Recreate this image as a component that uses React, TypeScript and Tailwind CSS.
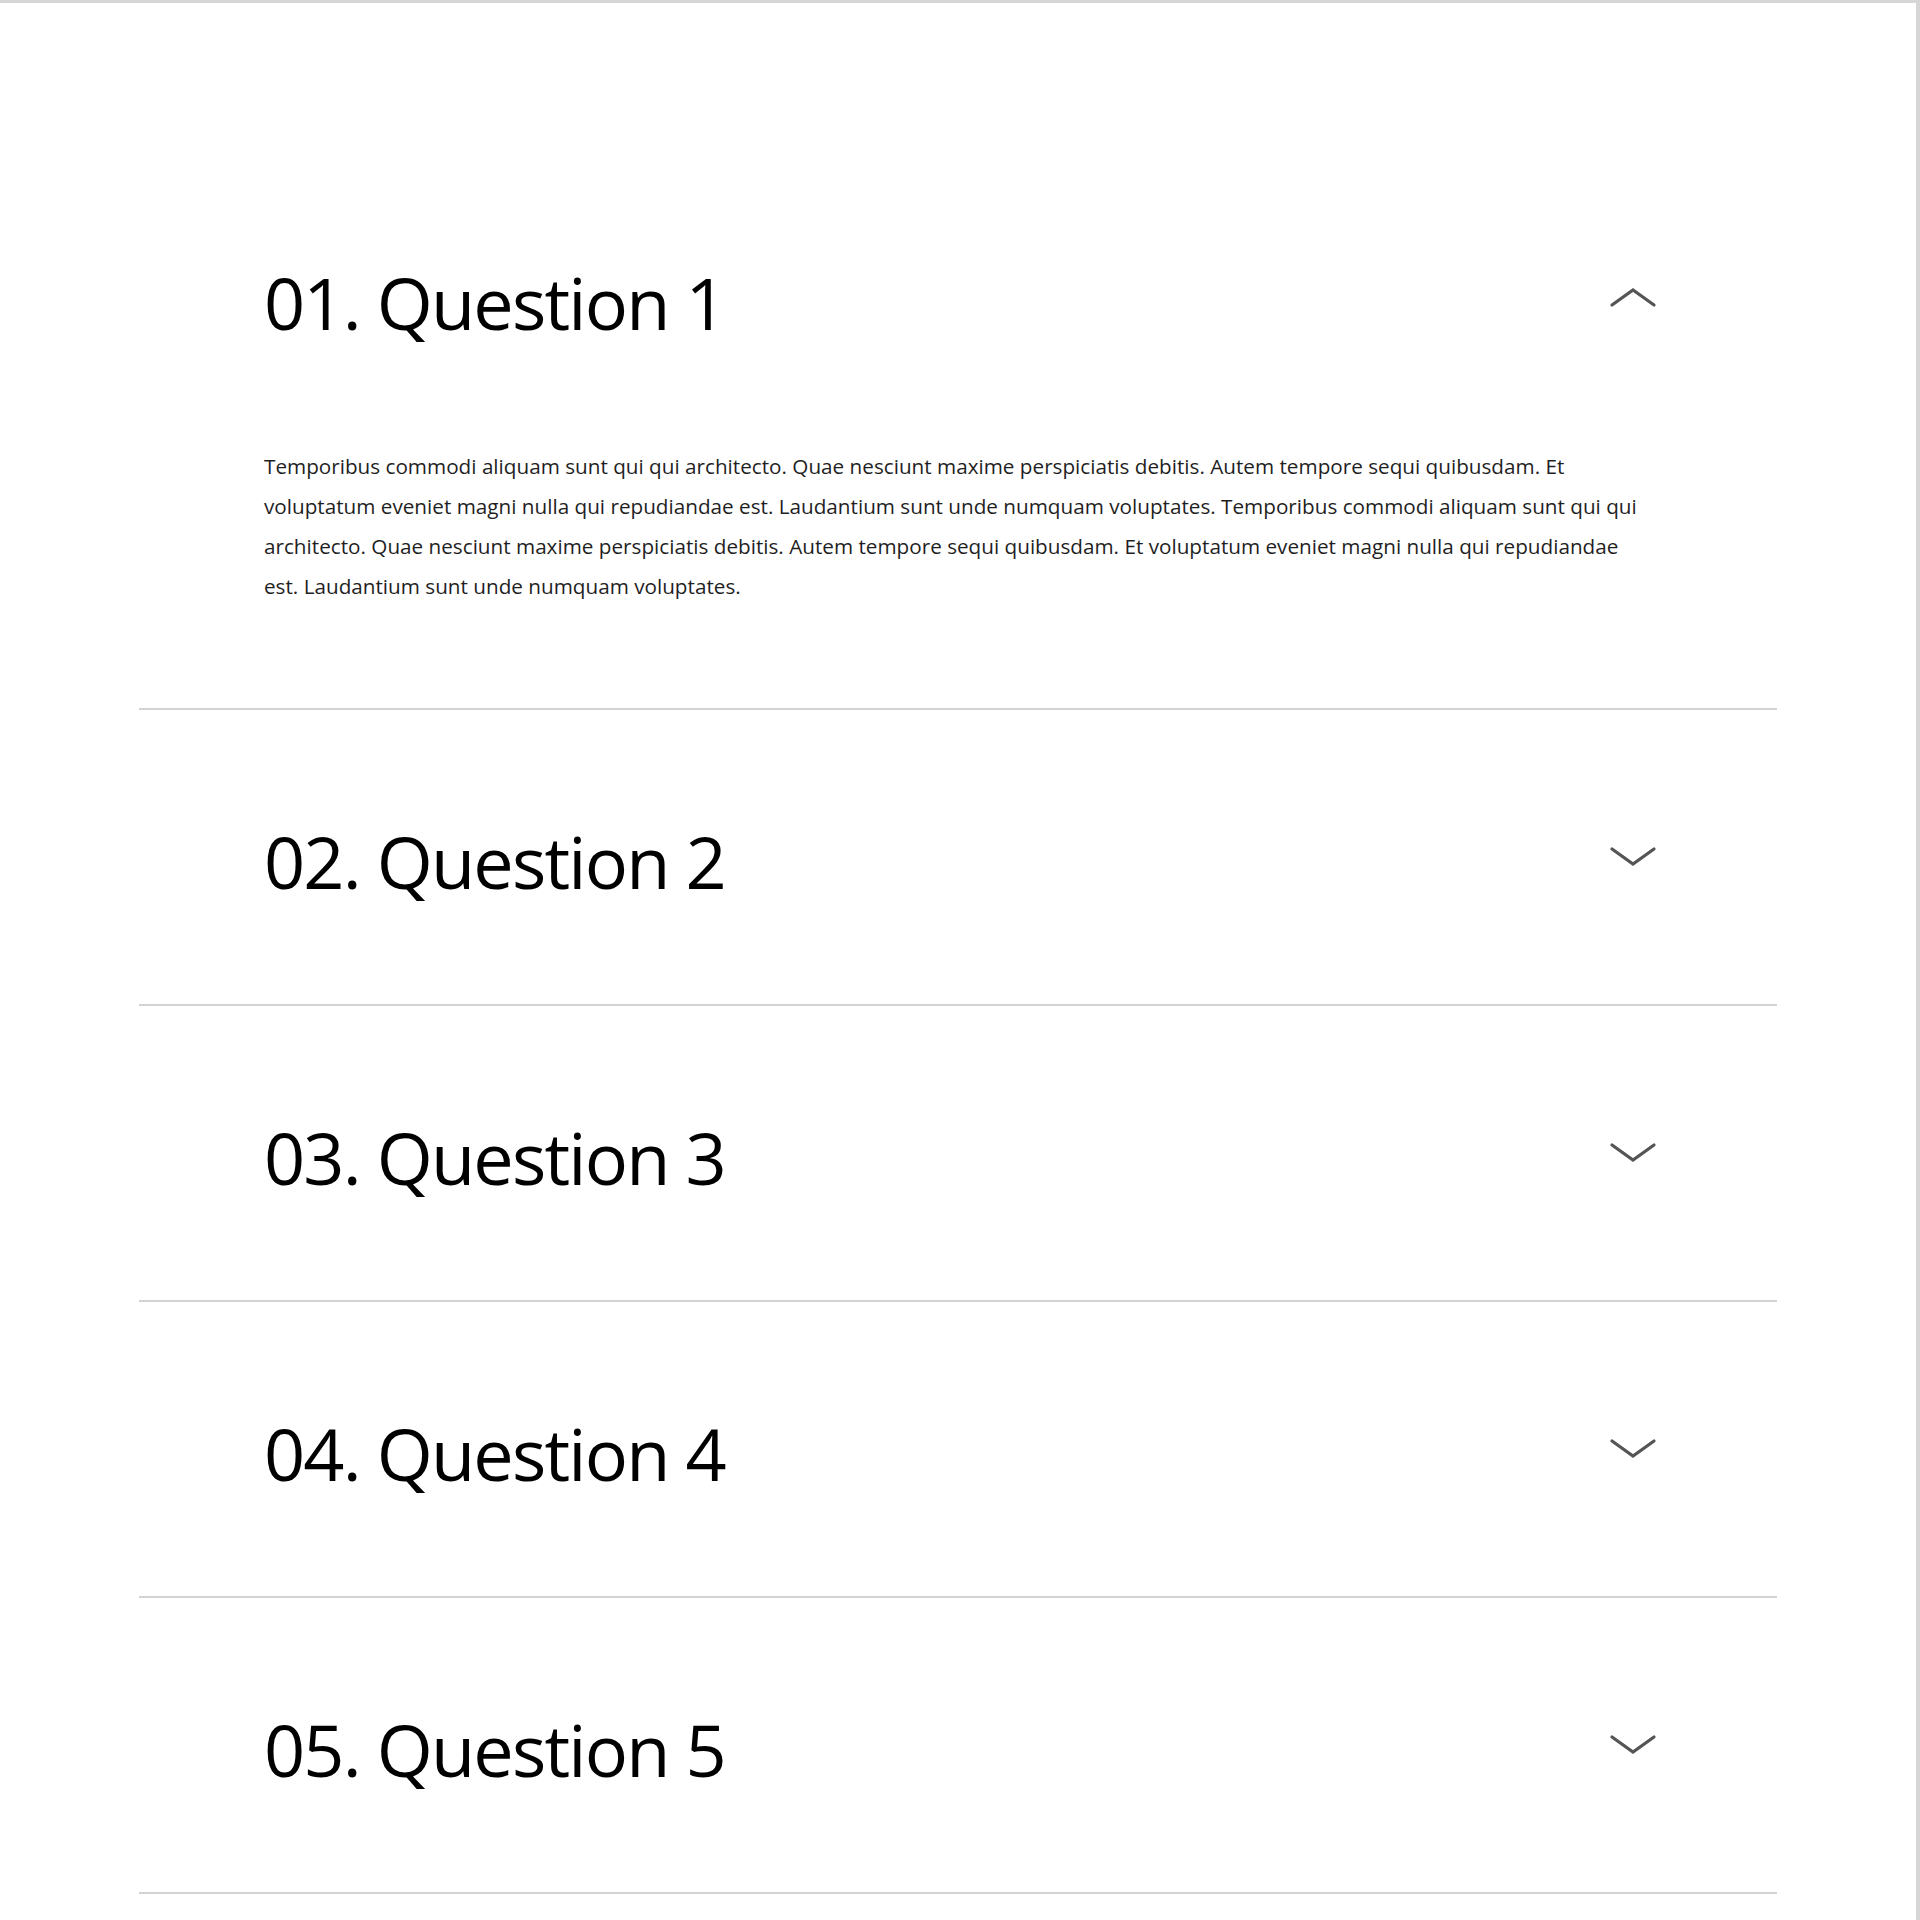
import { useState } from 'react';

const QUESTIONS = [
	{ id: 1, title: '01. Question 1' },
	{ id: 2, title: '02. Question 2' },
	{ id: 3, title: '03. Question 3' },
	{ id: 4, title: '04. Question 4' },
	{ id: 5, title: '05. Question 5' },
];

const ANSWER =
	'Temporibus commodi aliquam sunt qui qui architecto. Quae nesciunt maxime perspiciatis debitis. Autem tempore sequi quibusdam. Et voluptatum eveniet magni nulla qui repudiandae est. Laudantium sunt unde numquam voluptates. Temporibus commodi aliquam sunt qui qui architecto. Quae nesciunt maxime perspiciatis debitis. Autem tempore sequi quibusdam. Et voluptatum eveniet magni nulla qui repudiandae est. Laudantium sunt unde numquam voluptates.';

const Chevron = ({ open }: { open: boolean }) => (
	<svg width="48" height="22" viewBox="0 0 48 22" fill="none" className="shrink-0 mr-[-2px] mb-[10px]">
		<polyline
			points={open ? '3,19 24,4 45,19' : '3,4 24,19 45,4'}
			stroke="#555"
			strokeWidth="3.2"
			strokeLinecap="round"
			strokeLinejoin="miter"
		/>
	</svg>
);

export default function App() {
	const [openId, setOpenId] = useState<number | null>(1);

	return (
		<main className="min-h-[1920px] w-full bg-white border-t-[3px] border-r-4 border-[#d6d6d6] font-['Open_Sans',sans-serif]">
			<div className="mx-auto w-[1638px] pt-[147px]">
				{QUESTIONS.map((q) => {
					const open = openId === q.id;
					return (
						<div key={q.id} className="border-b-2 border-[#d2d2d2]">
							<button
								type="button"
								onClick={() => setOpenId(open ? null : q.id)}
								className={`flex w-full items-center justify-between pl-[125px] pr-[122px] text-left cursor-pointer ${open ? 'pt-[116px] pb-[108px]' : 'pt-[115px] pb-[107px]'}`}>
								<h2 className="text-[72px] leading-[72px] font-normal text-black tracking-[-0.025em]">{q.title}</h2>
								<Chevron open={open} />
							</button>
							{open && (
								<p className="pl-[125px] pr-[120px] pb-[102px] text-[20.7px] leading-[40px] text-[#1f1f1f]">{ANSWER}</p>
							)}
						</div>
					);
				})}
			</div>
		</main>
	);
}
